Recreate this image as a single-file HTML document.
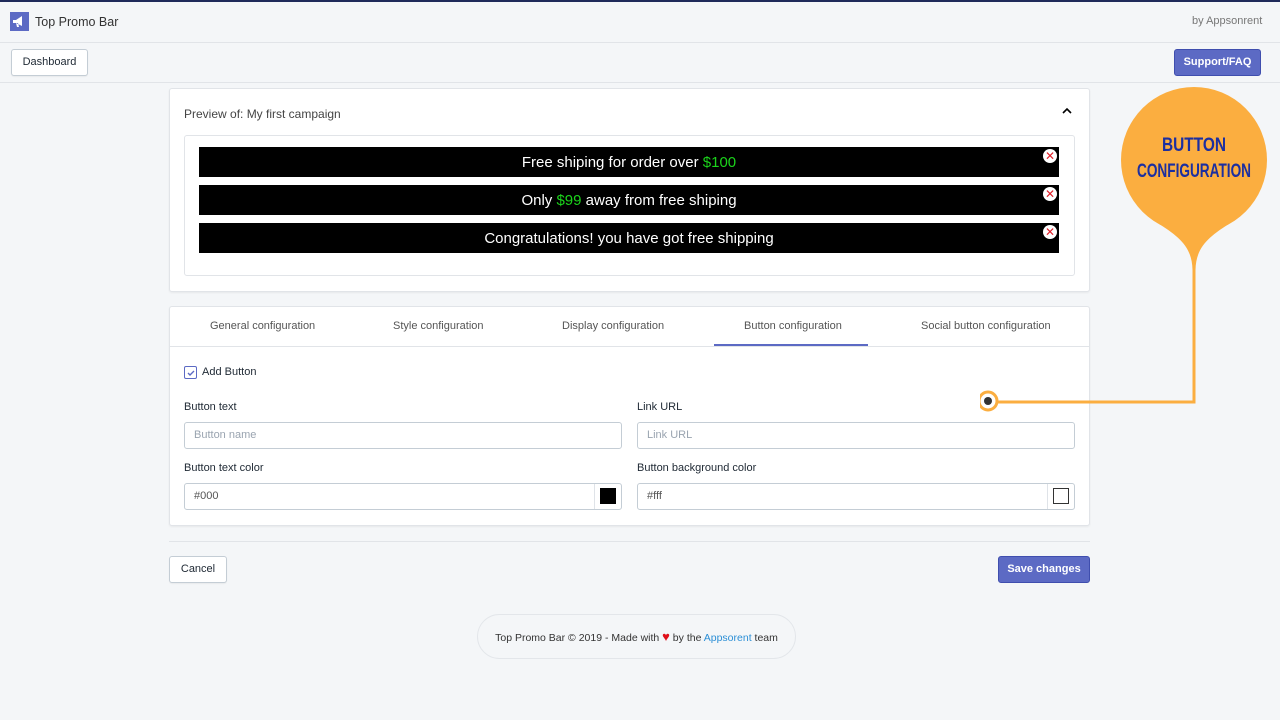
<!DOCTYPE html>
<html><head><style>
*{box-sizing:border-box;margin:0;padding:0}
body{width:1280px;height:720px;background:#f4f6f8;font-family:"Liberation Sans",sans-serif;color:#212b36;position:relative;overflow:hidden;font-size:11px}
.a{position:absolute}
.card{position:absolute;background:#fff;border:1px solid #e1e4e8;border-radius:3px;box-shadow:0 1px 2px rgba(0,0,0,.06)}
.bar{position:absolute;left:199px;width:860px;height:30px;background:#000;color:#fff;font-size:15px;text-align:center;line-height:32px}
.bar b{font-weight:normal;color:#1bd41b}
.x{position:absolute;right:2px;top:2px;width:14px;height:14px;border-radius:50%;background:#fff;color:#e0202a;font-size:12px;line-height:14px;text-align:center}
.inp{position:absolute;height:27px;border:1px solid #c4cdd5;border-radius:3px;background:#fff;font-size:11px;line-height:25px;padding-left:9px}
.btn{position:absolute;border:1px solid #c4cdd5;border-radius:3px;background:#fff;font-size:11px;text-align:center;box-shadow:0 1px 1px rgba(0,0,0,.05)}
.pb{position:absolute;background:#5c6ac4;color:#fff;border:1px solid #3f4eae;border-radius:3px;font-size:11px;text-align:center;font-weight:bold}
.tab{position:absolute;top:320px;font-size:11px;color:#555}
</style></head><body>
<div class="a" style="left:0;top:0;width:1280px;height:2px;background:#1f2a5a"></div>
<div class="a" style="left:0;top:42px;width:1280px;height:1px;background:#e1e4e8"></div>
<div class="a" style="left:0;top:82px;width:1280px;height:1px;background:#e1e4e8"></div>
<div class="a" style="left:10px;top:12px;width:19px;height:19px;background:#5c6ac4"></div>
<svg class="a" style="left:11px;top:14px" width="17" height="15"><path d="M2 6h3l6-4v10l-6-3H2z M5 9l1 4h2l-1-4" fill="#fff"/></svg>
<div class="a" style="left:35px;top:15px;font-size:12.5px;color:#333">Top Promo Bar</div>
<div class="a" style="left:1192px;top:15px;font-size:11px;color:#777">by Appsonrent</div>
<div class="btn" style="left:11px;top:49px;width:77px;height:27px;line-height:25px">Dashboard</div>
<div class="pb" style="left:1174px;top:49px;width:87px;height:27px;line-height:25px">Support/FAQ</div>

<div class="card" style="left:169px;top:88px;width:921px;height:204px"></div>
<div class="a" style="left:184px;top:107px;font-size:12px;color:#444">Preview of: My first campaign</div>
<svg class="a" style="left:1061px;top:106px" width="12" height="9"><path d="M2 7l4-4 4 4" stroke="#000" stroke-width="1.6" fill="none"/></svg>
<div class="a" style="left:184px;top:135px;width:891px;height:141px;border:1px solid #e1e4e8;border-radius:3px;background:#fff"></div>
<div class="bar" style="top:147px">Free shiping for order over <b>$100</b><span class="x">✕</span></div>
<div class="bar" style="top:185px">Only <b>$99</b> away from free shiping<span class="x">✕</span></div>
<div class="bar" style="top:223px">Congratulations! you have got free shipping<span class="x">✕</span></div>

<div class="card" style="left:169px;top:306px;width:921px;height:220px"></div>
<div class="a" style="left:170px;top:346px;width:919px;height:1px;background:#e1e4e8"></div>
<div class="a" style="left:714px;top:344px;width:154px;height:2px;background:#5c6ac4"></div>
<div class="tab" style="left:210px">General configuration</div>
<div class="tab" style="left:393px">Style configuration</div>
<div class="tab" style="left:562px">Display configuration</div>
<div class="tab" style="left:744px">Button configuration</div>
<div class="tab" style="left:921px">Social button configuration</div>
<div class="a" style="left:184px;top:366px;width:13px;height:13px;border:1.5px solid #5c6ac4;border-radius:2px"></div>
<svg class="a" style="left:186px;top:368px" width="10" height="10"><path d="M2 5l2 2 4-4" stroke="#5c6ac4" stroke-width="1.4" fill="none"/></svg>
<div class="a" style="left:202px;top:366px">Add Button</div>
<div class="a" style="left:184px;top:401px">Button text</div>
<div class="a" style="left:637px;top:401px">Link URL</div>
<div class="inp" style="left:184px;top:422px;width:438px;color:#9aa4b0">Button name</div>
<div class="inp" style="left:637px;top:422px;width:438px;color:#9aa4b0">Link URL</div>
<div class="a" style="left:184px;top:462px">Button text color</div>
<div class="a" style="left:637px;top:462px">Button background color</div>
<div class="inp" style="left:184px;top:483px;width:438px;color:#555">#000</div>
<div class="a" style="left:594px;top:484px;width:1px;height:25px;background:#dfe3e8"></div>
<div class="a" style="left:600px;top:488px;width:16px;height:16px;background:#000"></div>
<div class="inp" style="left:637px;top:483px;width:438px;color:#555">#fff</div>
<div class="a" style="left:1047px;top:484px;width:1px;height:25px;background:#dfe3e8"></div>
<div class="a" style="left:1053px;top:488px;width:16px;height:16px;border:1px solid #333;background:#fff"></div>

<div class="a" style="left:169px;top:541px;width:921px;height:1px;background:#e1e4e8"></div>
<div class="btn" style="left:169px;top:556px;width:58px;height:27px;line-height:25px">Cancel</div>
<div class="pb" style="left:998px;top:556px;width:92px;height:27px;line-height:25px">Save changes</div>
<div class="a" style="left:477px;top:614px;width:319px;height:45px;border:1px solid #e3e6ea;border-radius:23px;font-size:10.5px;line-height:43px;text-align:center;color:#333">Top Promo Bar © 2019 - Made with <span style="color:#e0101a;font-size:13px">♥</span> by the <span style="color:#2c8fd6">Appsorent</span> team</div>

<svg class="a" style="left:980px;top:85px" width="300" height="330">
<circle cx="214" cy="75" r="73" fill="#fbae40"/>
<path d="M176 137 C200 152 212 162 212.5 185 L215.5 185 C216 162 228 152 252 137 Z" fill="#fbae40"/>
<path d="M214 175V317H18" stroke="#fbae40" stroke-width="3" fill="none"/>
<circle cx="8" cy="316" r="9" fill="#fff" stroke="#fbae40" stroke-width="3"/>
<circle cx="8" cy="316" r="4" fill="#333"/>
<text x="214" y="66" text-anchor="middle" font-family="Liberation Sans" font-weight="bold" font-size="19" fill="#1c2fa0" textLength="64" lengthAdjust="spacingAndGlyphs">BUTTON</text>
<text x="214" y="92" text-anchor="middle" font-family="Liberation Sans" font-weight="bold" font-size="19" fill="#1c2fa0" textLength="114" lengthAdjust="spacingAndGlyphs">CONFIGURATION</text>
</svg>
</body></html>
